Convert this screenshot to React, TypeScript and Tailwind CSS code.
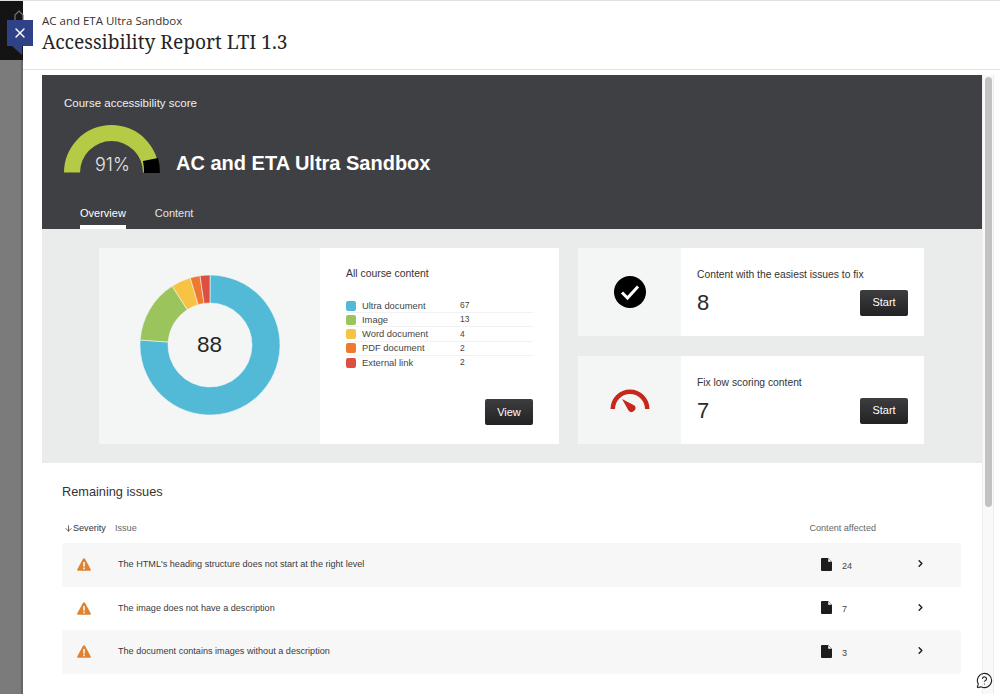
import { X, ChevronRight, ArrowDown, MessageCircleQuestion } from "lucide-react";

const sans = "font-['Liberation_Sans',Arial,sans-serif]";

const legend = [
  { name: "Ultra document", count: 67, color: "bg-[#52b9d6]" },
  { name: "Image", count: 13, color: "bg-[#9bc45c]" },
  { name: "Word document", count: 4, color: "bg-[#f6c344]" },
  { name: "PDF document", count: 2, color: "bg-[#ee7a30]" },
  { name: "External link", count: 2, color: "bg-[#dd4f40]" },
];

const issues = [
  { text: "The HTML's heading structure does not start at the right level", count: 24, shaded: true },
  { text: "The image does not have a description", count: 7, shaded: false },
  { text: "The document contains images without a description", count: 3, shaded: true },
];

// slices of the donut, as [from, to] in counts out of 88
function slice(from: number, to: number) {
  const total = 88;
  const point = (n: number, r: number) => {
    const a = (n / total) * Math.PI * 2;
    return `${70 + r * Math.sin(a)} ${70 - r * Math.cos(a)}`;
  };
  const large = to - from > total / 2 ? 1 : 0;
  return `M${point(from, 70)} A70 70 0 ${large} 1 ${point(to, 70)} L${point(to, 42)} A42 42 0 ${large} 0 ${point(from, 42)} Z`;
}

function Donut() {
  const parts = [
    { from: 0, to: 67, fill: "#52b9d6" },
    { from: 67, to: 80, fill: "#9bc45c" },
    { from: 80, to: 84, fill: "#f6c344" },
    { from: 84, to: 86, fill: "#ee7a30" },
    { from: 86, to: 88, fill: "#dd4f40" },
  ];
  return (
    <svg width="140" height="140" viewBox="0 0 140 140">
      {parts.map((p) => (
        <path key={p.fill} d={slice(p.from, p.to)} fill={p.fill} stroke="#f4f6f5" strokeWidth="0.6" />
      ))}
    </svg>
  );
}

function Gauge() {
  return (
    <svg width="96" height="50" viewBox="0 0 96 50" className="shrink-0">
      <path d="M0 48.5 A47.5 47.5 0 0 1 95 48.5 L79 48.5 A31.5 31.5 0 0 0 16 48.5 Z" fill="#b5ca45" />
      <path d="M79 37 L94 34 Q96 41 96 49 L80 49 Q80 42 79 37 Z" fill="#000" />
    </svg>
  );
}

function SpeedIcon() {
  return (
    <svg width="40" height="26" viewBox="0 0 40 26">
      <path d="M0.5 22 A19.5 19.5 0 0 1 39.5 22 L35 22 A15 15 0 0 0 5 22 Z" fill="#c6281c" />
      <path d="M9 10.5 L7 8.5 M14.5 7.5 L13.5 5 M20 6.5 L20 3 M25.5 7.5 L26.5 5 M31 10.5 L33 8.5" stroke="#c6281c" strokeWidth="2.4" />
      <path d="M12 12 L24.5 18.5 A3.8 3.8 0 0 1 18.5 23.5 Z" fill="#c6281c" />
    </svg>
  );
}

function DocIcon() {
  return (
    <svg width="11" height="13" viewBox="0 0 11 13" className="shrink-0 mb-[1px]">
      <path d="M1 0 H7 L11 4 V12 A1 1 0 0 1 10 13 H1 A1 1 0 0 1 0 12 V1 A1 1 0 0 1 1 0 Z" fill="#1d1d1d" />
      <path d="M7.2 0.6 V3.8 H10.4 Z" fill="#fff" />
    </svg>
  );
}

function WarnIcon() {
  return (
    <svg width="14" height="13" viewBox="0 0 14 13">
      <path d="M6 0.8 Q7 -0.4 8 0.8 L13.8 11.4 Q14.2 12.8 13 12.8 H1 Q-0.2 12.8 0.2 11.4 Z" fill="#e08330" />
      <rect x="6.3" y="4" width="1.5" height="4.6" fill="#fff" />
      <rect x="6.3" y="9.6" width="1.5" height="1.6" fill="#fff" />
    </svg>
  );
}

function DarkButton({ label }: { label: string }) {
  return (
    <button className="w-[48px] h-[26px] rounded-[2px] bg-gradient-to-b from-[#3e3e40] to-[#222224] text-white text-[11px]">
      {label}
    </button>
  );
}

export default function App() {
  return (
    <div className={`w-[1000px] h-[694px] flex overflow-hidden relative bg-white ${sans}`}>
      {/* page behind the panel */}
      <div className="w-[23px] shrink-0 flex flex-col border-t border-[#e0e0e0]">
        <div className="h-[59px] bg-[#141414]" />
        <div className="flex-1 bg-[#7b7b7b] border-r-2 border-[#666]" />
      </div>

      <svg width="10" height="12" viewBox="0 0 10 12" className="absolute left-[14px] top-[10px]">
        <path d="M1 12 V5 L5 1 L9 5 V12" fill="none" stroke="#777" strokeWidth="1.2" />
      </svg>
      <div className="absolute left-[7px] top-[20px] w-[26px] h-[26px] bg-[#2f4288] flex items-center justify-center z-10">
        <X size={16} color="#fff" strokeWidth={2} />
      </div>
      <div className="absolute left-[12px] top-[46px] w-0 h-0 border-t-[9px] border-t-[#2f4288] border-l-[10px] border-l-transparent z-10" />

      <div className="flex-1 flex flex-col min-w-0 border-t border-[#e0e0e0]">
        <header className="h-[69px] shrink-0 pl-[19px] pt-[13px] border-b border-[#e3e3e3] bg-white">
          <p className="font-['Open_Sans',sans-serif] text-[11.5px] leading-[14px] text-[#333]">AC and ETA Ultra Sandbox</p>
          <h1 className="font-['Noto_Serif','DejaVu_Serif','Liberation_Serif',serif] text-[19.2px] leading-[28px] text-[#262626]">
            Accessibility Report LTI 1.3
          </h1>
        </header>

        <div className="flex-1 flex min-h-0 pt-[5px]">
          <main className="ml-[19px] w-[940px] shrink-0">
            <section className="h-[154px] bg-[#3f4043] pl-[22px] flex flex-col">
              <p className="mt-[20px] text-[11.5px] leading-[16px] text-[#f0f0f0]">Course accessibility score</p>
              <div className="flex items-end mt-[13px] relative">
                <Gauge />
                <span className="absolute left-[31px] top-[31px] font-['Inter',sans-serif] font-light text-[18px] leading-[20px] text-[#e8e8e8]">91%</span>
                <h2 className="ml-[16px] text-[20px] leading-[24px] font-bold text-white mb-[-1px]">AC and ETA Ultra Sandbox</h2>
              </div>
              <div className="flex gap-[29px] ml-[16px] mt-[31px] text-[11px] leading-[16px]">
                <div className="text-white h-[24px] border-b-[4px] border-white">Overview</div>
                <div className="text-[#e6e6e6]">Content</div>
              </div>
            </section>

            <section className="h-[234px] bg-[#eaecec] pt-[19px] pl-[57px] flex gap-[19px]">
              <div className="w-[460px] h-[196px] flex">
                <div className="w-[221px] bg-[#f4f6f5] relative flex items-center justify-center pb-[3px]">
                  <Donut />
                  <span className="absolute text-[22.5px] text-[#262626]">88</span>
                </div>
                <div className="flex-1 bg-white pl-[26px] pr-[26px] pt-[19px] flex flex-col">
                  <p className="text-[10.4px] leading-[14px] text-[#333]">All course content</p>
                  <ul className="mt-[18px]">
                    {legend.map((l, i) => (
                      <li key={l.name} className={`h-[14.2px] flex items-center text-[9.4px] text-[#444] ${i < 4 ? "border-b border-[#f2f2f2]" : ""}`}>
                        <span className={`w-[10px] h-[10px] rounded-[2px] ${l.color}`} />
                        <span className="ml-[6px] w-[98px]">{l.name}</span>
                        <span className="text-[8.5px]">{l.count}</span>
                      </li>
                    ))}
                  </ul>
                  <div className="mt-auto mb-[19px] flex justify-end">
                    <DarkButton label="View" />
                  </div>
                </div>
              </div>

              <div className="w-[346px] flex flex-col gap-[20px]">
                {[
                  { title: "Content with the easiest issues to fix", n: 8 },
                  { title: "Fix low scoring content", n: 7 },
                ].map((c) => (
                  <div key={c.n} className="h-[88px] flex">
                    <div className="w-[103px] bg-[#f4f6f5] flex items-center justify-center">
                      {c.n === 8 ? (
                        <svg width="32" height="32" viewBox="0 0 32 32">
                          <circle cx="16" cy="16" r="16" fill="#000" />
                          <path d="M8 16.5 L13.5 22 L24 10.5" fill="none" stroke="#fff" strokeWidth="3" />
                        </svg>
                      ) : (
                        <SpeedIcon />
                      )}
                    </div>
                    <div className="flex-1 bg-white pl-[16px] pr-[16px] pt-[20px]">
                      <p className="text-[10.3px] leading-[14px] text-[#333]">{c.title}</p>
                      <div className="flex items-center justify-between mt-[4px]">
                        <span className="text-[22px] text-[#2b2b2b]">{c.n}</span>
                        <DarkButton label="Start" />
                      </div>
                    </div>
                  </div>
                ))}
              </div>
            </section>

            <section className="pl-[20px] pr-[21px]">
              <h3 className="mt-[21px] text-[12.75px] leading-[16px] text-[#333]">Remaining issues</h3>
              <div className="mt-[21px] h-[16px] flex items-center text-[9.1px] text-[#666]">
                <span className="w-[53px] flex items-center text-[#333]">
                  <ArrowDown size={9} className="ml-[2px]" />Severity
                </span>
                <span>Issue</span>
                <span className="ml-auto mr-[85px]">Content affected</span>
              </div>
              <div className="mt-[6px]">
                {issues.map((row) => (
                  <div key={row.text} className={`h-[43.5px] flex items-center rounded-[2px] ${row.shaded ? "bg-[#f7f7f7]" : "bg-white"}`}>
                    <span className="w-[56px] pl-[15px] shrink-0"><WarnIcon /></span>
                    <span className="flex-1 mt-[1px] text-[9.1px] text-[#3a3a3a]">{row.text}</span>
                    <span className="w-[94px] flex items-center">
                      <DocIcon />
                      <span className="ml-[10px] mt-[4px] text-[9.1px] text-[#444]">{row.count}</span>
                    </span>
                    <ChevronRight size={11} strokeWidth={3} className="mr-[35px] mb-[2px] text-[#1a1a1a]" />
                  </div>
                ))}
              </div>
            </section>
          </main>

          {/* scrollbar */}
          <div className="w-[12px] border-x border-[#eeeeee] bg-[#f9f9f9] flex justify-center pt-[2px]">
            <div className="w-[7px] h-[430px] rounded-full bg-[#c2c2c2]" />
          </div>
        </div>
      </div>

      <div className="absolute left-[976px] top-[672px]">
        <MessageCircleQuestion size={17} color="#222" strokeWidth={1.6} />
      </div>
    </div>
  );
}
